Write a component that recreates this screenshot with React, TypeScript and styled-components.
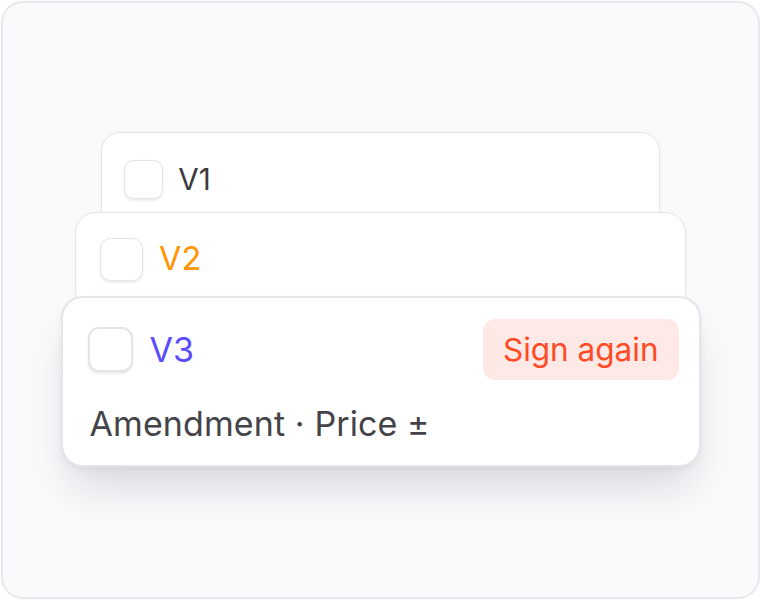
import React from "react";
import styled, { createGlobalStyle } from "styled-components";

const GlobalStyle = createGlobalStyle`
  html, body {
    margin: 0;
    padding: 0;
    background: #ffffff;
  }
  body {
    font-family: Inter, "Noto Sans", sans-serif;
  }
`;

interface Version {
  label: string;
  color: string;
  depth: number;
  padTop: number;
  overlap: number;
}

const versions: Version[] = [
  { label: "V1", color: "#3b3b3f", depth: 0.872, padTop: 23, overlap: 0 },
  { label: "V2", color: "#ff9500", depth: 0.955, padTop: 18, overlap: -16 },
];

export default function App() {
  return (
    <>
      <GlobalStyle />
      <Frame>
        <Stack>
          {versions.map((v, i) => (
            <Layer key={v.label} $overlap={v.overlap} $z={i + 1}>
              <Card $depth={v.depth} $padTop={v.padTop}>
                <Row>
                  <Checkbox />
                  <VersionLabel $color={v.color}>{v.label}</VersionLabel>
                </Row>
              </Card>
            </Layer>
          ))}
          <Layer $overlap={-16} $z={3}>
            <Card $depth={1} $padTop={21} $raised>
              <Row>
                <Checkbox />
                <VersionLabel $color="#5a4bff">V3</VersionLabel>
                <Badge>Sign again</Badge>
              </Row>
              <Description>Amendment · Price ±</Description>
            </Card>
          </Layer>
        </Stack>
      </Frame>
    </>
  );
}

const Frame = styled.div`
  box-sizing: border-box;
  margin: 1px;
  width: 759px;
  height: 598px;
  border: 2px solid #e8e7eb;
  border-radius: 22px;
  background: #faf9fb;
  display: flex;
  align-items: center;
  justify-content: center;
  padding-bottom: 1px;
`;

const Stack = styled.div`
  display: flex;
  flex-direction: column;
  align-items: center;
`;

const Layer = styled.div<{ $overlap: number; $z: number }>`
  position: relative;
  z-index: ${(p) => p.$z};
  margin-top: ${(p) => p.$overlap}px;
`;

const Card = styled.div<{ $depth: number; $padTop: number; $raised?: boolean }>`
  zoom: ${(p) => p.$depth};
  box-sizing: border-box;
  width: 640px;
  padding: ${(p) => p.$padTop}px 20px ${(p) => (p.$raised ? 21 : 24)}px 25px;
  background: #ffffff;
  border: 2px solid #e5e4e8;
  border-radius: 22px;
  box-shadow: ${(p) =>
    p.$raised
      ? "0 28px 44px -10px rgba(30, 20, 50, 0.15), 0 3px 6px rgba(0, 0, 0, 0.05)"
      : "0 2px 6px rgba(0, 0, 0, 0.03)"};
  display: flex;
  flex-direction: column;
  gap: 24px;
`;

const Row = styled.div`
  display: flex;
  align-items: center;
  min-height: 61px;
  gap: 17px;
`;

const Checkbox = styled.div`
  box-sizing: border-box;
  width: 45px;
  height: 45px;
  flex: none;
  border: 2px solid #e4e3e7;
  border-radius: 11px;
  background: #ffffff;
  box-shadow: 0 2px 3px rgba(0, 0, 0, 0.08);
`;

const VersionLabel = styled.span<{ $color: string }>`
  font-size: 34px;
  line-height: 40px;
  font-weight: 400;
  color: ${(p) => p.$color};
`;

const Badge = styled.span`
  margin-left: auto;
  height: 61px;
  padding: 0 20px;
  display: flex;
  align-items: center;
  border-radius: 12px;
  background: #ffe9e6;
  color: #ff4a26;
  font-size: 31.5px;
`;

const Description = styled.div`
  padding-left: 2px;
  font-size: 34px;
  line-height: 40px;
  letter-spacing: 0.1px;
  color: #444448;
`;
